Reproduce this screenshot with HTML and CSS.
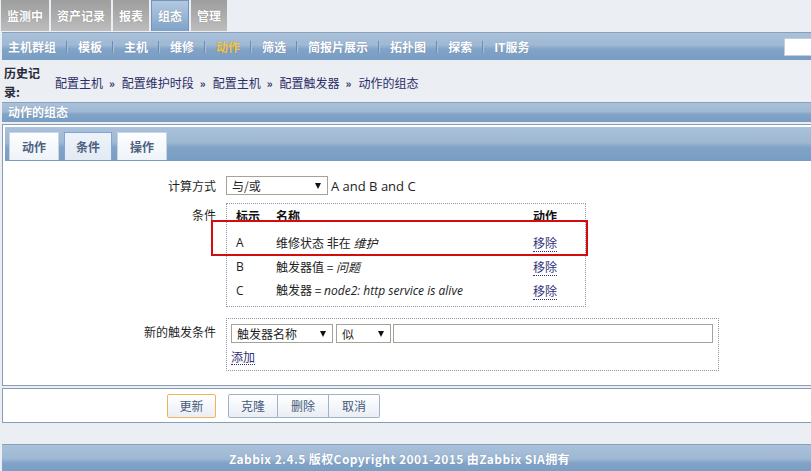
FILE: index.html
```html
<!DOCTYPE html>
<html lang="zh-CN">
<head>
<meta charset="utf-8">
<title>动作的组态</title>
<link rel="stylesheet" href="styles.css">
</head>
<body>
<div class="page">
  <div class="topnav">
    <span class="ttab">监测中</span>
    <span class="ttab">资产记录</span>
    <span class="ttab">报表</span>
    <span class="ttab active">组态</span>
    <span class="ttab">管理</span>
  </div>
  <div class="subnav">
    <span class="sitem">主机群组</span><span class="sep"></span>
    <span class="sitem">模板</span><span class="sep"></span>
    <span class="sitem">主机</span><span class="sep"></span>
    <span class="sitem">维修</span><span class="sep"></span>
    <span class="sitem cur">动作</span><span class="sep"></span>
    <span class="sitem">筛选</span><span class="sep"></span>
    <span class="sitem">简报片展示</span><span class="sep"></span>
    <span class="sitem">拓扑图</span><span class="sep"></span>
    <span class="sitem">探索</span><span class="sep"></span>
    <span class="sitem">IT服务</span>
    <span class="search"></span>
  </div>
  <div class="history">
    <div class="hlabel">历史记录:</div>
    <div class="crumbs">
      <a class="crumb">配置主机</a><span class="raq">»</span>
      <a class="crumb">配置维护时段</a><span class="raq">»</span>
      <a class="crumb">配置主机</a><span class="raq">»</span>
      <a class="crumb">配置触发器</a><span class="raq">»</span>
      <a class="crumb">动作的组态</a>
    </div>
  </div>
  <div class="hdr">动作的组态</div>
  <div class="box">
    <div class="tabbar">
      <span class="tab">动作</span>
      <span class="tab sel">条件</span>
      <span class="tab">操作</span>
    </div>
    <div class="form">
      <div class="row r1">
        <div class="lbl">计算方式</div>
        <div class="field">
          <span class="select s-calc">与/或<span class="arrow"></span></span>
          <span class="expr">A and B and C</span>
        </div>
      </div>
      <div class="row r2">
        <div class="lbl">条件</div>
        <div class="cond">
          <div class="crow chead"><span>标示</span><span>名称</span><span>动作</span></div>
          <div class="crow first"><span class="lat">A</span><span>维修状态 非在 <em>维护</em></span><span><a class="link">移除</a></span></div>
          <div class="crow"><span class="lat">B</span><span>触发器值 = <em>问题</em></span><span><a class="link">移除</a></span></div>
          <div class="crow"><span class="lat">C</span><span>触发器 = <em class="lat">node2: http service is alive</em></span><span><a class="link">移除</a></span></div>
          <div class="redbox"></div>
        </div>
      </div>
      <div class="row r3">
        <div class="lbl">新的触发条件</div>
        <div class="newc">
          <div class="ctrls">
            <span class="select s-type">触发器名称<span class="arrow"></span></span>
            <span class="select s-op">似<span class="arrow"></span></span>
            <span class="tinput"></span>
          </div>
          <a class="link add">添加</a>
        </div>
      </div>
    </div>
  </div>
  <div class="btnbox">
    <span class="btn main">更新</span>
    <div class="btngroup">
      <span class="btn">克隆</span><span class="btn">删除</span><span class="btn">取消</span>
    </div>
  </div>
  <div class="footer">Zabbix 2.4.5 版权Copyright 2001-2015 由Zabbix SIA拥有</div>
</div>
</body>
</html>
```
FILE: styles.css
```css
html, body {
  margin: 0;
  padding: 0;
}
body {
  background: #ebeff3;
  font-family: "Noto Sans CJK SC", "DejaVu Sans", sans-serif;
  font-size: 12px;
  color: #1f1f1f;
}
.page {
  width: 811px;
  height: 471px;
  overflow: hidden;
}

/* top tabs */
.topnav {
  display: flex;
  gap: 2px;
  height: 32px;
  padding-left: 1px;
  align-items: flex-start;
}
.ttab {
  height: 31px;
  line-height: 31px;
  padding: 0 6px;
  box-sizing: border-box;
  color: #fff;
  font-weight: bold;
  background: linear-gradient(#9e9e9e, #acacac 50%, #bebebe);
  text-shadow: 0 0 1px rgba(0,0,0,0.3);
}
.ttab.active {
  background: linear-gradient(#b3c9e0, #9ab6d4 50%, #7ea2c7);
  border: 1px solid #7594bb;
  border-bottom: none;
  line-height: 30px;
  padding: 0 6px;
}

/* sub nav */
.subnav {
  display: flex;
  align-items: center;
  height: 28px;
  box-sizing: border-box;
  margin-left: 2px;
  margin-right: -12px;
  padding-left: 6px;
  border-top: 1px solid #8a9fba;
  background: linear-gradient(#aac1da, #9fb8d3 45%, #81a3c8 60%, #789cc2);
}
.sitem {
  color: #fff;
  font-weight: bold;
  white-space: nowrap;
  text-shadow: 0 0 1px rgba(40,60,100,0.35);
}
.sitem.cur {
  color: #f5c542;
}
.sep {
  width: 2px;
  height: 12px;
  margin: 0 10px;
  background: #6c8cb4;
  border-right: 1px solid #a9bfd8;
  box-sizing: border-box;
}
.search {
  margin-left: auto;
  width: 39px;
  height: 18px;
  background: #fff;
  border: 1px solid #c3cedb;
  box-sizing: border-box;
}

/* history */
.history {
  display: flex;
  align-items: center;
  height: 42px;
  box-sizing: border-box;
  padding: 3px 0 1px 4px;
}
.hlabel {
  width: 40px;
  font-weight: bold;
  line-height: 19px;
  color: #2a2a3a;
  margin-right: 11px;
}
.crumbs {
  display: flex;
  align-items: center;
  padding-top: 1px;
}
.crumb {
  color: #2d2d66;
}
.raq {
  font-weight: bold;
  color: #2d2d66;
  margin: 0 7px 0 6px;
  font-size: 11px;
}

/* section header */
.hdr {
  margin-left: 2px;
  margin-right: -12px;
  height: 20px;
  box-sizing: border-box;
  border-top: 1px solid #8a9fba;
  background: linear-gradient(#aac1da, #9fb8d3 45%, #81a3c8 60%, #789cc2);
  color: #fff;
  font-weight: bold;
  line-height: 18px;
  padding-left: 6px;
  text-shadow: 0 0 1px rgba(40,60,100,0.35);
}

/* main box */
.box {
  margin: 2px -12px 0 2px;
  border: 1px solid #8b9db4;
  background: #fff;
  padding: 2px 2px 0 2px;
}
.tabbar {
  display: flex;
  gap: 5px;
  height: 34px;
  box-sizing: border-box;
  padding: 5px 0 0 4px;
  background: linear-gradient(#aac1da, #9fb8d3 45%, #81a3c8 60%, #789cc2);
}
.tab {
  width: 50px;
  height: 28px;
  box-sizing: border-box;
  text-align: center;
  line-height: 27px;
  font-weight: bold;
  color: #4d6182;
  background: linear-gradient(#fdfeff, #eef3f8);
  border: 1px solid #c8d5e3;
  border-bottom: none;
}
.tab.sel {
  width: 48px;
  border: 1px solid #7ea4db;
  border-bottom: none;
  background: linear-gradient(#eef3f9, #e2eaf3);
}

/* form */
.form {
  padding: 15px 0 14px 0;
}
.row {
  display: flex;
  align-items: flex-start;
}
.r2 { margin-top: 8px; }
.r3 { margin-top: 11px; }
.lbl {
  width: 211px;
  margin-right: 10px;
  text-align: right;
  line-height: 16px;
  color: #1f1f1f;
}
.r1 { align-items: center; }
.r2 .lbl { padding-top: 4px; }
.r3 .lbl { padding-top: 6px; }

.field {
  display: flex;
  align-items: center;
}
.select {
  display: flex;
  align-items: center;
  justify-content: space-between;
  height: 19px;
  box-sizing: border-box;
  border: 1px solid #a3a39a;
  background: #fff;
  padding: 0 6px 0 5px;
  color: #1f1f1f;
  line-height: 17px;
}
.arrow {
  width: 0;
  height: 0;
  border-left: 3px solid transparent;
  border-right: 3px solid transparent;
  border-top: 6px solid #111;
}
.s-calc { width: 102px; }
.expr {
  font-family: "Open Sans", "Noto Sans CJK SC", sans-serif;
  font-size: 13px;
  margin-left: 3px;
  color: #222;
}

/* conditions */
.cond {
  position: relative;
  width: 360px;
  height: 104px;
  box-sizing: border-box;
  border: 1px dotted #8d97a6;
  padding: 0 0 4px 9px;
}
.crow {
  display: grid;
  grid-template-columns: 40px 257px 1fr;
  height: 24px;
  align-items: center;
  color: #222;
}
.chead {
  height: 22px;
  font-weight: bold;
  color: #111;
}
.crow.first { margin-top: 4px; }
.lat {
  font-family: "Open Sans", "Noto Sans CJK SC", sans-serif;
}
em {
  font-style: italic;
}
.link {
  color: #2f2f78;
  text-decoration: none;
  border-bottom: 1px dotted #2f2f78;
  line-height: 14px;
}
.redbox {
  position: absolute;
  left: -16px;
  top: 16px;
  width: 377px;
  height: 36px;
  box-sizing: border-box;
  border: 2px solid #d20d0d;
}

/* new condition */
.newc {
  width: 493px;
  height: 53px;
  box-sizing: border-box;
  border: 1px dotted #8d97a6;
  padding: 5px 0 0 4px;
}
.ctrls {
  display: flex;
}
.s-type { width: 102px; }
.s-op { width: 55px; margin-left: 3px; }
.tinput {
  width: 320px;
  height: 19px;
  margin-left: 2px;
  box-sizing: border-box;
  border: 1px solid #a3a39a;
  background: #fff;
}
.add {
  display: inline-block;
  margin-top: 7px;
}

/* buttons */
.btnbox {
  display: flex;
  align-items: flex-start;
  margin: 2px -12px 0 2px;
  height: 35px;
  box-sizing: border-box;
  border: 1px solid #8b9db4;
  background: #fff;
  padding: 5px 0 0 164px;
}
.btn {
  width: 50px;
  height: 24px;
  box-sizing: border-box;
  text-align: center;
  line-height: 22px;
  color: #445a7a;
  background: linear-gradient(#ffffff, #e9eef4);
  border: 1px solid #9eb2c9;
}
.btn.main {
  width: 49px;
  border-color: #efb55e;
  border-radius: 2px;
  margin-right: 12px;
}
.btngroup {
  display: flex;
  border-radius: 2px;
}
.btngroup .btn + .btn {
  border-left: none;
  width: 51px;
}
.btngroup .btn:first-child { border-radius: 2px 0 0 2px; }
.btngroup .btn:last-child { border-radius: 0 2px 2px 0; }

/* footer */
.footer {
  margin: 21px 0 0 2px;
  height: 30px;
  line-height: 28px;
  padding-right: 14px;
  text-align: center;
  color: #fff;
  font-weight: bold;
  letter-spacing: 0.4px;
  border-top: 1px solid #8a9fba;
  background: linear-gradient(#aac1da, #9fb8d3 45%, #81a3c8 60%, #789cc2);
  text-shadow: 0 0 1px rgba(40,60,100,0.35);
}
```
